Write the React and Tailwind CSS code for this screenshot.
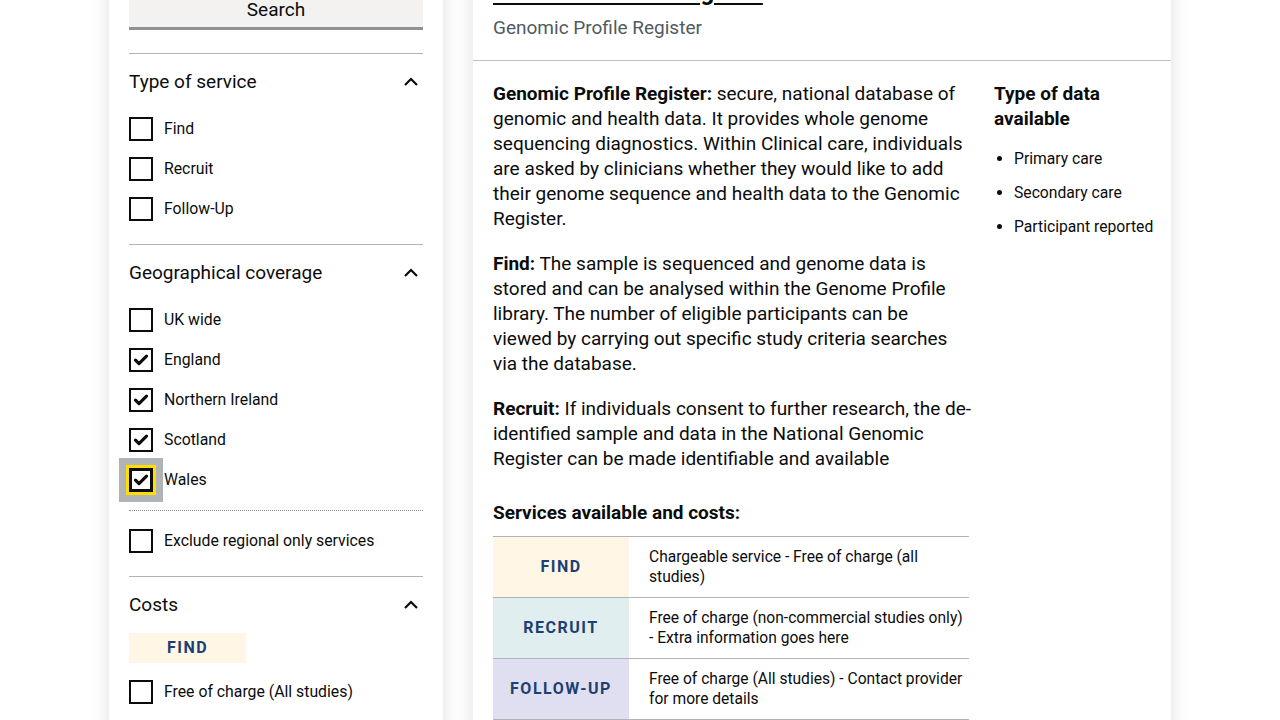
import { useState } from "react";

const Chevron = () => (
    <svg width="18" height="18" viewBox="0 0 18 18" className="text-[#0b0c0c]">
        <polyline points="3,12 9,6 15,12" fill="none" stroke="currentColor" strokeWidth="2.2" />
    </svg>
);

const Tick = () => (
    <svg width="16" height="16" viewBox="0 0 16 16">
        <path d="M2.5 8.2 L6 11.6 L13.5 4.2" fill="none" stroke="#0b0c0c" strokeWidth="3.2" strokeLinecap="round" strokeLinejoin="round" />
    </svg>
);

const Checkbox = ({ label, checked, focused, onToggle }) => (
    <label className="flex items-center gap-[11px] cursor-pointer">
        <span className={focused
            ? "relative flex items-center justify-center w-6 h-6"
            : "flex items-center justify-center w-6 h-6 border-2 border-[#0b0c0c] bg-white"}
            onClick={onToggle}>
            {focused && <span className="absolute -left-[10px] -top-[10px] w-[44px] h-[44px] bg-[#b1b4b6]"></span>}
            {focused && <span className="absolute inset-0 border-[3px] border-[#0b0c0c] bg-white outline-[3px] outline-solid outline-[#ffdd00]"></span>}
            {checked && <span className="relative flex"><Tick /></span>}
        </span>
        <span className="text-[15.8px] leading-6 text-[#0b0c0c]">{label}</span>
    </label>
);

const Section = ({ title, children }) => (
    <div className="border-t border-[#b1b4b6] pt-[14px] pb-[23px]">
        <div className="flex items-center justify-between h-7 pr-[3px]">
            <span className="text-[19px] leading-7 text-[#0b0c0c]">{title}</span>
            <Chevron />
        </div>
        {children}
    </div>
);

const Tag = ({ children, className }) => (
    <span className={"inline-flex items-center justify-center font-bold uppercase tracking-[1.5px] text-[#1d3f73] text-base " + className}>
        {children}
    </span>
);

const costs = [
    { tag: "Find", bg: "bg-[#fff6e6]", text: "Chargeable service - Free of charge (all studies)" },
    { tag: "Recruit", bg: "bg-[#e0eef0]", text: "Free of charge (non-commercial studies only) - Extra information goes here" },
    { tag: "Follow-Up", bg: "bg-[#e0dff1]", text: "Free of charge (All studies) - Contact provider for more details" },
];

export default function App() {
    const [types, setTypes] = useState({ Find: false, Recruit: false, "Follow-Up": false });
    const [geo, setGeo] = useState({ "UK wide": false, England: true, "Northern Ireland": true, Scotland: true, Wales: true });
    const [exclude, setExclude] = useState(false);
    const [freeFind, setFreeFind] = useState(false);

    return (
        <div className="min-h-[720px] bg-white overflow-hidden font-['Roboto',sans-serif] text-[#0b0c0c]">
            <div className="flex items-start justify-center gap-[30px] -mt-[43px]">
                {/* filters */}
                <aside className="w-[334px] bg-white shadow-[0_0_18px_rgba(0,0,0,0.13)] px-5 pt-[33px]">
                    <button className="w-full h-10 pt-[3px] bg-[#f3f2f1] border-b-[3px] border-[#929191] text-[19px] leading-7">
                        Search
                    </button>
                    <div className="mt-[23px]">
                        <Section title="Type of service">
                            <div className="mt-[21px] flex flex-col gap-4">
                                {Object.keys(types).map((t) => (
                                    <Checkbox key={t} label={t} checked={types[t]}
                                        onToggle={() => setTypes({ ...types, [t]: !types[t] })} />
                                ))}
                            </div>
                        </Section>
                        <Section title="Geographical coverage">
                            <div className="mt-[21px] flex flex-col gap-4">
                                {Object.keys(geo).map((g) => (
                                    <Checkbox key={g} label={g} checked={geo[g]} focused={g === "Wales"}
                                        onToggle={() => setGeo({ ...geo, [g]: !geo[g] })} />
                                ))}
                            </div>
                            <div className="mt-[18px] border-t border-dotted border-[#8b8b8b]"></div>
                            <div className="mt-[18px]">
                                <Checkbox label="Exclude regional only services" checked={exclude} onToggle={() => setExclude(!exclude)} />
                            </div>
                        </Section>
                        <Section title="Costs">
                            <div className="mt-[14px]">
                                <Tag className="w-[117px] h-[30px] bg-[#fff6e6]">Find</Tag>
                            </div>
                            <div className="mt-[17px]">
                                <Checkbox label="Free of charge (All studies)" checked={freeFind} onToggle={() => setFreeFind(!freeFind)} />
                            </div>
                            <div className="h-20"></div>
                        </Section>
                    </div>
                </aside>

                {/* details */}
                <main className="w-[698px] bg-white shadow-[0_0_18px_rgba(0,0,0,0.13)]">
                    <div className="px-5 pt-5 pb-5 border-b border-[#b7c6ce]">
                        <a href="#" className="block w-fit text-2xl leading-[30px] font-bold underline underline-offset-[3px]">Genomic Profile Register</a>
                        <p className="mt-[9px] text-[19px] leading-6 text-[#505a5f]">Genomic Profile Register</p>
                    </div>
                    <div className="px-5 pt-5 pb-10 grid grid-cols-[478px_1fr] gap-[23px]">
                        <div className="text-[19px] leading-[25px]">
                            <p className="w-[476px]"><b className="font-bold">Genomic Profile Register:</b> secure, national database of genomic and health data. It provides whole genome sequencing diagnostics. Within Clinical care, individuals are asked by clinicians whether they would like to add their genome sequence and health data to the Genomic Register.</p>
                            <p className="mt-5 w-[476px]"><b className="font-bold">Find:</b> The sample is sequenced and genome data is stored and can be analysed within the Genome Profile library. The number of eligible participants can be viewed by carrying out specific study criteria searches via the database.</p>
                            <p className="mt-5 w-[490px]"><b className="font-bold">Recruit:</b> If individuals consent to further research, the de-identified sample and data in the National Genomic Register can be made identifiable and available</p>
                            <h3 className="mt-[29px] font-bold">Services available and costs:</h3>
                            <div className="mt-[11px] w-[476px] border-t border-[#b1b4b6]">
                                {costs.map((c) => (
                                    <div key={c.tag} className="flex h-[61px] border-b border-[#b1b4b6]">
                                        <Tag className={"w-[136px] h-full " + c.bg}>{c.tag}</Tag>
                                        <div className="flex-1 flex items-center pl-5 text-[15.6px] leading-5">{c.text}</div>
                                    </div>
                                ))}
                            </div>
                        </div>
                        <div>
                            <h3 className="text-[19px] leading-[25px] font-bold">Type of data available</h3>
                            <ul className="mt-4 list-disc pl-5 flex flex-col gap-[10px] text-[15.7px] leading-6 whitespace-nowrap">
                                <li>Primary care</li>
                                <li>Secondary care</li>
                                <li>Participant reported</li>
                            </ul>
                        </div>
                    </div>
                </main>
            </div>
        </div>
    );
}
